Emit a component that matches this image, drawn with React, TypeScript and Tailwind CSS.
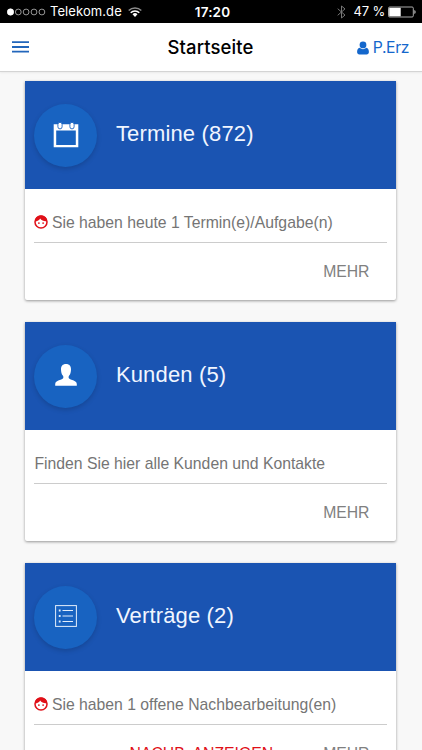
import type { ReactNode } from "react";

const CalendarIcon = () => (
  <svg className="h-[26px] w-[26px]" viewBox="0 0 26 26" fill="none">
    <path
      fill="#fff"
      fillRule="evenodd"
      d="M0.7 2.2h24.6v23.1H0.7zM3.2 8.6v14.4h19.6V8.6z"
    />
    <rect x="4.9" y="0.3" width="4.2" height="6.6" rx="2.1" fill="#fff" stroke="#1863c1" strokeWidth="0.9" />
    <rect x="16.9" y="0.3" width="4.2" height="6.6" rx="2.1" fill="#fff" stroke="#1863c1" strokeWidth="0.9" />
  </svg>
);

const PersonIcon = () => (
  <svg className="mb-[2px] h-[22px] w-[22px]" viewBox="0 0 22 22" fill="#fff">
    <path d="M11 0C7.6 0 5.9 2.2 6 5.4c.1 2.5.6 4.6 1.8 6.2.7.9.8 2 .3 2.7-.5.7-1.5 1.1-2.6 1.5C2.3 16.9.2 17.7.2 20v1.8h21.6V20c0-2.3-2.1-3.1-5.3-4.2-1.1-.4-2.1-.8-2.6-1.5-.5-.7-.4-1.8.3-2.7 1.2-1.6 1.7-3.7 1.8-6.2C16.1 2.2 14.4 0 11 0z" />
  </svg>
);

const ListIcon = () => (
  <svg className="mb-[2px] h-[22px] w-[22px]" viewBox="0 0 22 22" fill="none" stroke="#e3eefb">
    <rect x="0.6" y="0.6" width="20.8" height="20.8" />
    <path d="M7.5 5.5h10.5M7.5 11h10.5M7.5 16.5h10.5" />
    <path d="M3.8 5.5h1.8M3.8 11h1.8M3.8 16.5h1.8" strokeWidth="1.8" />
  </svg>
);

const FaceIcon = () => (
  <svg className="mr-[3.5px] mt-[4px] h-[14px] w-[14px] shrink-0" viewBox="0 0 24 24">
    <circle cx="12" cy="12" r="10.3" fill="#fff" stroke="#e01018" strokeWidth="2.6" />
    <path
      fill="#e01018"
      d="M1.5 11C2 5 6 1 12 1s10.5 4 10.5 10l-1.5-.5C17 10.8 13 9.5 10.5 6 9 8.8 6 10.8 1.5 11z"
    />
    <circle cx="8.4" cy="13.8" r="1.5" fill="#e01018" />
    <circle cx="15.6" cy="13.8" r="1.5" fill="#e01018" />
  </svg>
);

const UserIcon = () => (
  <svg className="h-[14px] w-[12px]" viewBox="0 0 12 14" fill="currentColor">
    <circle cx="6" cy="3.9" r="3.4" />
    <path d="M2.7 6.7C4.6 8.6 7.4 8.6 9.3 6.7c1.9.3 2.6 2.3 2.6 4.2 0 1.6-.9 2.5-2.3 2.5H2.4C1 13.4.1 12.5.1 10.9c0-1.9.7-3.9 2.6-4.2z" />
  </svg>
);

const StatusBar = () => (
  <div className="flex h-[23px] items-center bg-black pl-[7px] pr-[6px] text-[13px] text-white">
    <div className="flex flex-1 items-center">
      <svg className="h-[8px] w-[39px]" viewBox="0 0 39 8" fill="none" stroke="#d5d5d5" strokeWidth="0.7">
        <circle cx="3.5" cy="4" r="3.2" fill="#fff" stroke="#fff" />
        <circle cx="11.3" cy="4" r="2.9" />
        <circle cx="19.1" cy="4" r="2.9" />
        <circle cx="27" cy="4" r="2.9" />
        <circle cx="34.9" cy="4" r="2.9" />
      </svg>
      <span className="ml-[4px] pt-[1px] tracking-[0.08px]">Telekom.de</span>
      <svg className="ml-[6px] h-[10px] w-[14px]" viewBox="0 0 14 10" fill="none" strokeWidth="1.5">
        <path d="M0.7 3.5a9 9 0 0 1 12.6 0" stroke="#8c8c8c" />
        <path d="M2.7 5.7a6 6 0 0 1 8.6 0" stroke="#fff" />
        <path d="M4.5 7.3a3.5 3.5 0 0 1 5 0L7 9.9z" fill="#fff" />
      </svg>
    </div>
    <span className="pl-[2px] pt-[1px] text-[13.5px] font-semibold tracking-[0.15px]">17:20</span>
    <div className="flex flex-1 items-center justify-end">
      <svg className="h-[14px] w-[9px]" viewBox="0 0 9 14" fill="none" stroke="#777">
        <path d="M0.7 3.7l7.3 6.4L4.5 13V1L8 3.9 0.7 10.3" />
      </svg>
      <span className="ml-[8px] pt-[1px] tracking-[-0.2px]">47 %</span>
      <svg className="ml-[3px] h-[12px] w-[28px]" viewBox="0 0 28 12" fill="none">
        <rect x="0.5" y="1" width="24.8" height="10" rx="1.2" stroke="#aaa" />
        <rect x="1.2" y="1.8" width="11.5" height="8.5" fill="#fff" />
        <path d="M26.4 4c1.6.6 1.6 3.4 0 4z" fill="#ccc" />
      </svg>
    </div>
  </div>
);

const Header = () => (
  <header className="flex h-[48.5px] items-center border-b border-[#d4d4d4] bg-white pl-[12px] pr-[13px] shadow-[0_1px_2px_rgba(0,0,0,0.06)]">
    <div className="flex-1">
      <svg className="h-[12px] w-[17px]" viewBox="0 0 17 12" stroke="#2266bb" strokeWidth="1.8">
        <path d="M0 1.2h17M0 6h17M0 10.7h17" />
      </svg>
    </div>
    <h1 className="pt-[2px] text-[18.5px] font-medium tracking-[0.1px] text-black">Startseite</h1>
    <div className="flex flex-1 items-center justify-end pt-[3px] text-[#1467cc]">
      <UserIcon />
      <span className="ml-[4px] text-[15.75px] tracking-[-0.4px]">P.Erz</span>
    </div>
  </header>
);

interface CardProps {
  title: string;
  text: string;
  icon: ReactNode;
  alert?: boolean;
  action?: string;
}

const Card = ({ title, text, icon, alert, action }: CardProps) => (
  <section className="h-[218.5px] shrink-0 rounded-b-[2px] bg-white shadow-[0_1px_3px_rgba(0,0,0,0.4)]">
    <div className="flex h-[108px] items-center bg-[#1a54b2] pl-[9px]">
      <div className="flex h-[63px] w-[63px] items-center justify-center rounded-full bg-[#1863c1] shadow-[0_2px_5px_rgba(0,0,0,0.16)]">
        {icon}
      </div>
      <h2 className="ml-[18.5px] pb-[3px] text-[22px] leading-[28px] tracking-[0.16px] text-[#f1f6ff]">{title}</h2>
    </div>
    <div className="px-[9px] pt-[22px]">
      <div className="flex h-[32px] items-start border-b border-[#cccccc] text-[15.75px] leading-[24px] text-[#757575]">
        {alert && <FaceIcon />}
        <span>{text}</span>
      </div>
      <div className="flex h-[58px] items-center justify-end gap-[50px] pr-[17.5px] text-[15.75px] text-[#808080]">
        {action && <span className="text-[#e01018]">{action}</span>}
        <span>MEHR</span>
      </div>
    </div>
  </section>
);

const App = () => {
  return (
    <div className="flex h-[750px] w-[422px] flex-col overflow-hidden bg-[#f8f8f8] font-['Liberation_Sans',Arial,sans-serif]">
      <div className="shrink-0 font-[Inter,sans-serif]">
        <StatusBar />
        <Header />
      </div>
      <main className="flex min-h-0 flex-1 flex-col gap-[22.5px] overflow-hidden pl-[25.4px] pr-[26px] pt-[9.5px]">
        <Card
          title="Termine (872)"
          text="Sie haben heute 1 Termin(e)/Aufgabe(n)"
          icon={<CalendarIcon />}
          alert
        />
        <Card
          title="Kunden (5)"
          text="Finden Sie hier alle Kunden und Kontakte"
          icon={<PersonIcon />}
        />
        <Card
          title="Verträge (2)"
          text="Sie haben 1 offene Nachbearbeitung(en)"
          icon={<ListIcon />}
          alert
          action="NACHB. ANZEIGEN"
        />
      </main>
    </div>
  );
};

export default App;
